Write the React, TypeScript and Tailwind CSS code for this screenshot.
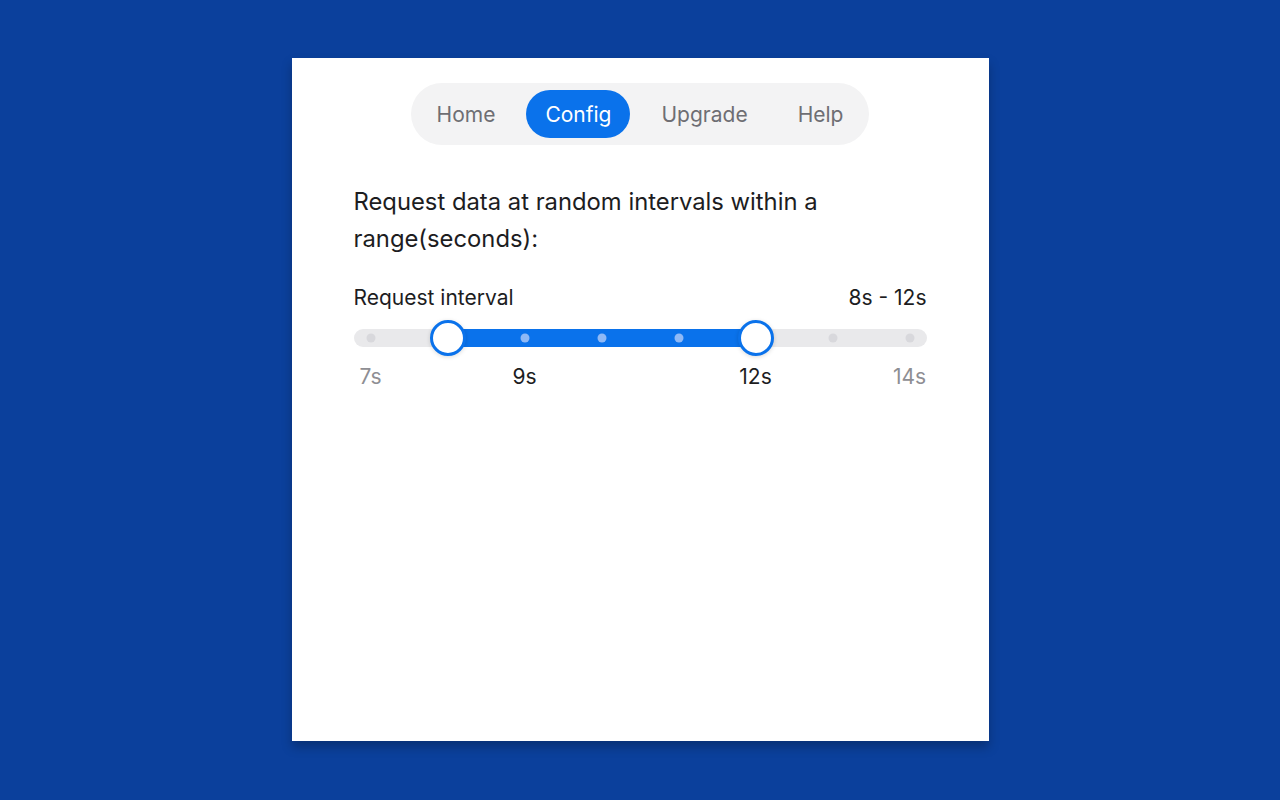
import { useState } from 'react'

const tabs = ['Home', 'Config', 'Upgrade', 'Help']

const MIN = 7
const MAX = 14
const STEPS = MAX - MIN

// label values shown under the track, and which ones are emphasized
const marks = [
  { value: 7, strong: false },
  { value: 9, strong: true },
  { value: 12, strong: true },
  { value: 14, strong: false },
]

const pct = (value: number) => `${((value - MIN) / STEPS) * 100}%`

function RangeSlider({ low, high }: { low: number; high: number }) {
  const steps = Array.from({ length: STEPS + 1 }, (_, i) => MIN + i)

  return (
    <div>
      <div className="relative h-[18px] rounded-full bg-[#e9e9eb] px-[17px]">
        <div className="relative h-full">
          <div
            className="absolute top-0 h-full bg-[#0a72eb]"
            style={{ left: pct(low), width: `calc(${pct(high)} - ${pct(low)})` }}
          />
          {steps.map((step) => {
            const inRange = step > low && step < high
            const isThumb = step === low || step === high
            if (isThumb) return null
            return (
              <span
                className={`absolute top-1/2 h-[9px] w-[9px] -translate-x-1/2 -translate-y-1/2 rounded-full ${
                  inRange ? 'bg-[#8fb9f6]' : 'bg-[#d8d8dc]'
                }`}
                key={step}
                style={{ left: pct(step) }}
              />
            )
          })}
          {[low, high].map((value) => (
            <span
              className="absolute top-1/2 h-[36px] w-[36px] -translate-x-1/2 -translate-y-1/2 rounded-full border-[3px] border-[#0a72eb] bg-white shadow-[0_1px_4px_rgba(0,0,0,0.15)]"
              key={value}
              style={{ left: pct(value) }}
            />
          ))}
        </div>
      </div>
      <div className="relative mx-[17px] mt-[18px] h-[24px]">
        {marks.map((mark) => (
          <span
            className={`absolute top-0 -translate-x-1/2 text-[21px] leading-[24px] ${
              mark.strong ? 'text-[#1d1d1f]' : 'text-[#8e8e93]'
            }`}
            key={mark.value}
            style={{ left: pct(mark.value) }}
          >
            {mark.value}s
          </span>
        ))}
      </div>
    </div>
  )
}

export default function App() {
  const [active, setActive] = useState('Config')

  return (
    <div className="flex min-h-[800px] w-full items-start justify-center bg-[#0b409c] pt-[58px] font-['Inter','Liberation_Sans',sans-serif]">
      <div className="flex h-[683px] w-[697px] flex-col bg-white px-[62px] shadow-[0_6px_10px_rgba(0,0,0,0.25)]">
        <div className="mt-[25px] flex justify-center">
          <nav className="flex gap-3 rounded-full bg-[#f3f3f4] p-[7px]">
            {tabs.map((tab) => (
              <button
                className={`h-12 rounded-full px-[19px] pt-[2px] text-[21px] ${
                  tab === active ? 'bg-[#0a72eb] text-white' : 'text-[#6e6e73]'
                }`}
                key={tab}
                onClick={() => setActive(tab)}
                type="button"
              >
                {tab}
              </button>
            ))}
          </nav>
        </div>

        <p className="mt-[38px] text-[23.8px] leading-[37px] text-[#1d1d1f]">
          Request data at random intervals within a range(seconds):
        </p>

        <div className="mt-[29px] flex items-center justify-between text-[21px] leading-[24px] text-[#1d1d1f]">
          <span>Request interval</span>
          <span>8s - 12s</span>
        </div>

        <div className="mt-[19px]">
          <RangeSlider high={12} low={8} />
        </div>
      </div>
    </div>
  )
}
